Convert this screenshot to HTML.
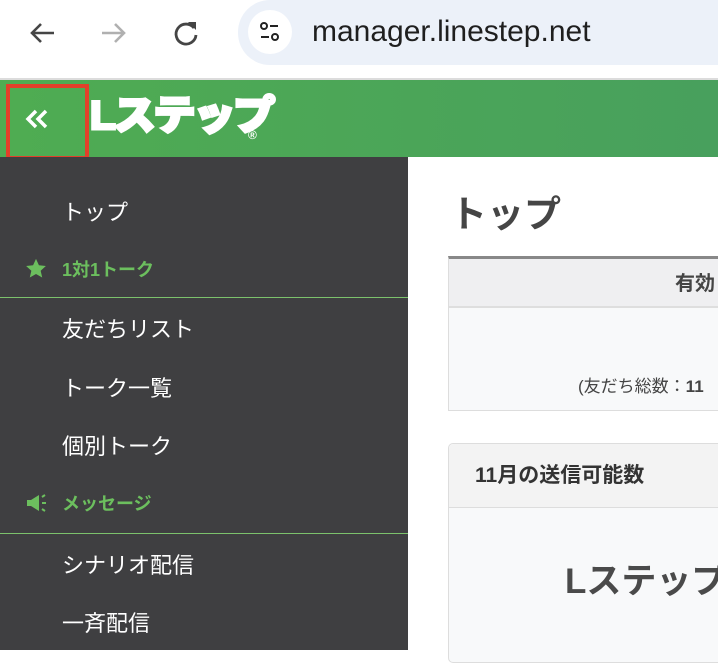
<!DOCTYPE html>
<html><head><meta charset="utf-8">
<style>
*{margin:0;padding:0;box-sizing:border-box}
html,body{width:718px;height:650px;overflow:hidden;background:#fff;font-family:"Liberation Sans","Noto Sans CJK JP",sans-serif}
.abs{position:absolute}
.side{left:0;top:157px;width:408px;height:493px;background:#3f3f41}
.it{position:absolute;left:62px;color:#fff;font-size:22px;line-height:26px;white-space:nowrap}
.gr{position:absolute;left:62px;color:#6cbf5e;font-size:18px;font-weight:bold;line-height:24px;white-space:nowrap}
.ln{position:absolute;left:0;width:408px;height:1px;background:#7cc26c}
</style></head><body>
<div class="abs" style="left:0;top:0;width:718px;height:78px;background:#fff"></div>
<svg class="abs" style="left:26px;top:18px" width="34" height="30" viewBox="0 0 34 30"><path d="M28 15H6M15 6l-9 9 9 9" stroke="#454545" stroke-width="2.6" fill="none"/></svg>
<svg class="abs" style="left:98px;top:18px" width="34" height="30" viewBox="0 0 34 30"><path d="M4 15h22M17 6l9 9-9 9" stroke="#b0b0b0" stroke-width="2.6" fill="none"/></svg>
<svg class="abs" style="left:170px;top:17px" width="32" height="32" viewBox="0 0 32 32"><path d="M24 11A10 10 0 1 0 26 18" stroke="#454545" stroke-width="2.8" fill="none"/><path d="M18 5h8v8z" fill="#454545"/></svg>
<div class="abs" style="left:238px;top:0;width:520px;height:65px;background:#ecf1f9;border-radius:32px 0 0 32px"></div>
<div class="abs" style="left:248px;top:10px;width:44px;height:44px;border-radius:50%;background:#fff"></div>
<svg class="abs" style="left:258px;top:20px" width="24" height="24" viewBox="0 0 24 24"><circle cx="6" cy="6" r="3" stroke="#222" stroke-width="2" fill="none"/><path d="M12 6h8M3 17h8" stroke="#222" stroke-width="2"/><circle cx="17" cy="17" r="3" stroke="#222" stroke-width="2" fill="none"/></svg>
<div class="abs" style="left:312px;top:14px;font-size:30px;color:#1f1f1f;line-height:36px">manager.linestep.net</div>
<div class="abs" style="left:0;top:78px;width:718px;height:2px;background:#dcdcdc"></div>
<div class="abs" style="left:0;top:80px;width:718px;height:77px;background:linear-gradient(90deg,#4fac52,#48a05d)"></div>
<div class="abs" style="left:6px;top:84px;width:83px;height:76px;border:4px solid #e2402a"></div>
<svg class="abs" style="left:25px;top:108px" width="24" height="22" viewBox="0 0 24 22"><path d="M11 3l-8 8 8 8M21 3l-8 8 8 8" stroke="#fff" stroke-width="3.5" fill="none"/></svg>
<div class="abs" style="left:90px;top:88px;color:#fff;font-size:40px;font-weight:900;line-height:56px;letter-spacing:-2px;-webkit-text-stroke:3px #fff;transform:scaleX(1.05);transform-origin:left">Lステップ</div>
<div class="abs" style="left:248px;top:128px;color:#fff;font-size:12px;font-weight:bold">®</div>
<div class="abs side"></div>
<div class="it" style="top:200px">トップ</div>
<svg class="abs" style="left:25px;top:258px" width="22" height="21" viewBox="0 0 24 23"><path d="M12 1l3.2 7 7.6.8-5.7 5.1 1.7 7.5L12 17.5 5.2 21.4l1.7-7.5L1.2 8.8 8.8 8z" fill="#6cbf5e"/></svg>
<div class="gr" style="top:258px">1対1トーク</div>
<div class="ln" style="top:297px"></div>
<div class="it" style="top:317px">友だちリスト</div>
<div class="it" style="top:376px">トーク一覧</div>
<div class="it" style="top:434px">個別トーク</div>
<svg class="abs" style="left:26px;top:493px" width="22" height="20" viewBox="0 0 22 20"><path d="M1 7h4l8-5v16l-8-5H1z" fill="#6cbf5e"/><path d="M16 4l3-2M16 10h4M16 16l3 2" stroke="#6cbf5e" stroke-width="2"/></svg>
<div class="gr" style="top:492px">メッセージ</div>
<div class="ln" style="top:533px"></div>
<div class="it" style="top:553px">シナリオ配信</div>
<div class="it" style="top:611px">一斉配信</div>
<div class="abs" style="left:450px;top:193px;font-size:37px;font-weight:bold;color:#454545;line-height:44px">トップ</div>
<div class="abs" style="left:448px;top:256px;width:280px;height:155px;border:1px solid #ddd;border-top:3px solid #888;background:#f8f9fa"></div>
<div class="abs" style="left:449px;top:259px;width:280px;height:49px;background:#efeff1;border-bottom:2px solid #dedede"></div>
<div class="abs" style="left:675px;top:271px;font-size:20px;font-weight:bold;color:#444;line-height:26px;white-space:nowrap">有効</div>
<div class="abs" style="left:578px;top:375px;font-size:17px;color:#444;line-height:24px;white-space:nowrap">(友だち総数：<b>11</b></div>
<div class="abs" style="left:448px;top:443px;width:290px;height:220px;border:1px solid #ddd;border-radius:5px;background:#f8f9fa"></div>
<div class="abs" style="left:449px;top:444px;width:290px;height:64px;background:#f3f3f3;border-bottom:1px solid #ddd;border-top-left-radius:5px"></div>
<div class="abs" style="left:475px;top:462px;font-size:21px;font-weight:bold;color:#333;line-height:28px;white-space:nowrap">11月の送信可能数</div>
<div class="abs" style="left:565px;top:561px;font-size:35px;font-weight:bold;color:#4a4a4a;line-height:42px;white-space:nowrap">Lステップ</div>
</body></html>
